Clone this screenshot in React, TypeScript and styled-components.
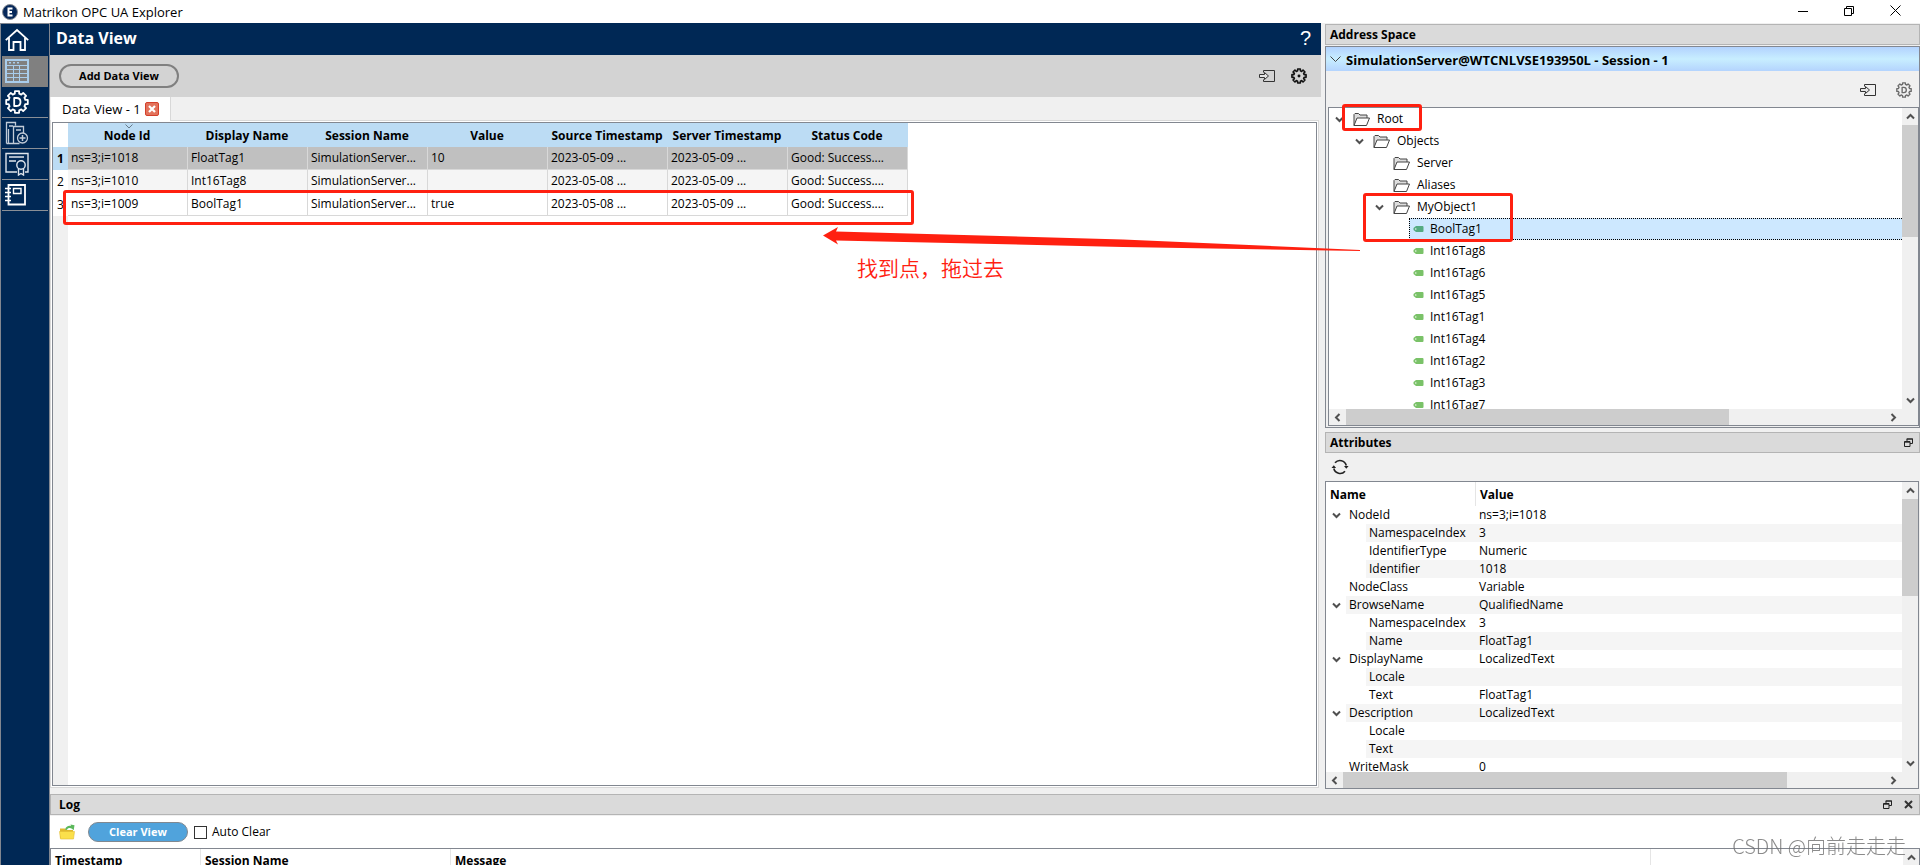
import React from 'react';
import styled, { createGlobalStyle, css } from 'styled-components';

const color = {
  navy: '#002855',
  frame: '#828790',
  face: '#f0f0f0',
  strip: '#d3d3d3',
  dock: '#dadada',
  dockEdge: '#b4b4b4',
  grid: '#d8d8d8',
  head: '#bcdcf4',
  alt: '#f5f5f5',
  thumb: '#cdcdcd',
  mark: '#ff2010',
};

const GlobalStyle = createGlobalStyle`
  *, *::before, *::after { box-sizing: border-box; }
  body {
    margin: 0;
    background: ${color.face};
    color: #000;
    font: 12px/16px "Open Sans", "Noto Sans CJK SC", sans-serif;
  }
  button {
    margin: 0; padding: 0; border: 0; background: none; color: inherit;
    font: inherit; cursor: pointer;
  }
  table { border-collapse: separate; border-spacing: 0; table-layout: fixed; }
  th, td { padding: 0; text-align: left; }
  svg { display: block; flex: none; }
`;

/* ---------- shell ---------- */

const Window = styled.div`
  display: flex;
  flex-direction: column;
  height: 100vh;
  overflow: hidden;
`;

const TitleBar = styled.header`
  display: flex;
  align-items: center;
  flex: none;
  height: 23px;
  padding: 0 2px;
  background: #fff;
`;

const AppTitle = styled.h1`
  flex: 1;
  margin: 0 0 0 5px;
  font-size: 13px;
  font-weight: 400;
`;

const WindowButton = styled.button`
  display: grid;
  place-items: center;
  width: 46px;
  height: 20px;
  margin-bottom: 2px;
`;

const Body = styled.div`
  display: flex;
  flex: 1;
  min-height: 0;
`;

const Sidebar = styled.nav`
  flex: none;
  width: 50px;
  padding: 1px 1px 0;
  background: ${color.navy};
  border: solid ${color.frame};
  border-width: 1px 1px 0 1px;
`;

const NavButton = styled.button<{ $active?: boolean; $line?: boolean }>`
  display: flex;
  align-items: center;
  width: 46px;
  height: 31px;
  padding-left: 3px;
  background: ${(p) => (p.$active ? '#808080' : 'transparent')};
  border-bottom: 1px solid ${(p) => (p.$line ? '#8a8f96' : 'transparent')};
`;

const Content = styled.div`
  display: flex;
  flex-direction: column;
  flex: 1;
  min-width: 0;
`;

const Workspace = styled.div`
  display: flex;
  flex: 1;
  gap: 4px;
  min-height: 0;
`;

/* ---------- data view ---------- */

const DataView = styled.main`
  position: relative;
  display: flex;
  flex-direction: column;
  flex: 1;
  min-width: 0;
`;

const ViewHeader = styled.div`
  display: flex;
  align-items: center;
  justify-content: space-between;
  height: 32px;
  padding: 0 10px 2px 6px;
  background: ${color.navy};
  color: #fff;
`;

const ViewTitle = styled.h2`
  margin: 0;
  font-size: 16px;
  line-height: 24px;
`;

const HelpButton = styled.button`
  font: 20px/24px "Liberation Sans", sans-serif;
`;

const ViewToolbar = styled.div`
  display: flex;
  align-items: center;
  gap: 16px;
  height: 42px;
  padding: 0 14px 0 9px;
  background: ${color.strip};
`;

const AddButton = styled.button`
  width: 120px;
  height: 24px;
  margin-right: auto;
  border: 2px solid #808080;
  border-radius: 12px;
  font-size: 11px;
  font-weight: 700;
`;

const TabStrip = styled.div`
  display: flex;
  align-items: center;
  height: 23px;
  padding-left: 1px;
`;

const Tab = styled.div`
  position: relative;
  display: flex;
  align-items: center;
  gap: 4px;
  width: 120px;
  height: 24px;
  margin-bottom: -1px;
  padding-left: 11px;
  background: #fff;
  border-right: 1px solid ${color.grid};
  font-size: 13px;
`;

const Pane = styled.div`
  display: flex;
  flex: 1;
  min-height: 0;
  margin: 0 2px 6px 0;
  padding: 1px;
  background: #fff;
  border: 1px solid ${color.grid};
`;

const GridFrame = styled.div`
  flex: 1;
  overflow: hidden;
  border: 1px solid ${color.frame};
  background: linear-gradient(to right, ${color.face} 15px, #fff 15px);
`;

const DataTable = styled.table`
  width: 855px;
  background: #fff;
`;

const HeadCell = styled.th`
  position: relative;
  height: 24px;
  padding: 2px 2px 0 0;
  background: ${color.head};
  text-align: center;
  white-space: nowrap;
`;

const CornerCell = styled.td`
  background: #fff;
`;

const RowNumber = styled.th<{ $current?: boolean }>`
  height: 23px;
  text-align: center;
  font-weight: ${(p) => (p.$current ? 700 : 400)};
  background: ${(p) => (p.$current ? color.head : '#fff')};
`;

const BodyCell = styled.td<{ $tone: string }>`
  height: 23px;
  padding: 0 0 0 3px;
  overflow: hidden;
  white-space: nowrap;
  background: ${(p) => p.$tone};
  border: solid ${color.grid};
  border-width: 0 1px 1px 0;
`;

const SortArrow = styled.svg`
  position: absolute;
  top: 1px;
  left: 57px;
`;

/* ---------- docks ---------- */

const SideColumn = styled.div`
  display: grid;
  grid-template-rows: minmax(0, 404fr) minmax(0, 357fr);
  gap: 4px;
  flex: none;
  width: 595px;
  padding: 1px 0 5px;
`;

const Dock = styled.section`
  display: flex;
  flex-direction: column;
  min-width: 0;
  min-height: 0;
`;

const DockTitle = styled.div<{ $inset?: number }>`
  display: flex;
  align-items: center;
  gap: 12px;
  flex: none;
  height: 21px;
  padding: 0 6px 0 ${(p) => p.$inset ?? 4}px;
  background: ${color.dock};
  border: 1px solid ${color.dockEdge};
`;

const DockName = styled.h2`
  flex: 1;
  margin: 0;
  font-size: 12px;
  line-height: 16px;
`;

const SessionFrame = styled.div`
  display: flex;
  flex-direction: column;
  flex: 1;
  min-height: 0;
  margin-top: 1px;
  padding: 0 0 1px 0;
  border: 1px solid ${color.frame};
`;

const SessionButton = styled.button`
  display: flex;
  align-items: center;
  gap: 5px;
  flex: none;
  height: 24px;
  padding: 1px 0 0 4px;
  font-size: 13px;
  font-weight: 700;
  background: linear-gradient(#b2d2fe, #c8eeff 50%, #b4d4fe);
`;

const SessionTools = styled.div`
  display: flex;
  align-items: center;
  justify-content: flex-end;
  gap: 20px;
  flex: none;
  height: 36px;
  padding: 2px 7px 0 0;
`;

const ScrollFrame = styled.div<{ $left?: number; $right?: number }>`
  display: grid;
  grid-template: minmax(0, 1fr) 16px / minmax(0, 1fr) 16px;
  flex: 1;
  min-height: 0;
  margin-left: ${(p) => p.$left ?? 0}px;
  margin-right: ${(p) => p.$right ?? 0}px;
  background: ${color.face};
  border: 1px solid ${color.frame};
`;

const Viewport = styled.div`
  position: relative;
  overflow: hidden;
  background: #fff;
`;

const Bar = styled.div<{ $vertical?: boolean }>`
  display: flex;
  flex-direction: ${(p) => (p.$vertical ? 'column' : 'row')};
  background: ${color.face};
`;

const BarButton = styled.button<{ $vertical?: boolean }>`
  display: grid;
  place-items: center;
  flex: none;
  ${(p) => (p.$vertical ? css`height: 17px; width: 16px;` : css`width: 17px; height: 16px;`)}
`;

const Track = styled.div<{ $vertical?: boolean }>`
  display: flex;
  flex-direction: ${(p) => (p.$vertical ? 'column' : 'row')};
  flex: 1;
`;

const Thumb = styled.div<{ $share: number }>`
  flex: 0 0 ${(p) => p.$share}%;
  background: ${color.thumb};
`;

/* ---------- tree ---------- */

const Tree = styled.ul`
  margin: 0;
  padding: 0;
  list-style: none;
`;

const TreeRow = styled.li<{ $level: number }>`
  display: flex;
  height: 22px;
  padding-left: ${(p) => p.$level * 20}px;
`;

const Twisty = styled.span`
  display: grid;
  place-items: center;
  flex: none;
  width: 20px;
`;

const NodeLabel = styled.span<{ $selected?: boolean; $leaf?: boolean }>`
  display: flex;
  align-items: center;
  flex: 1;
  gap: ${(p) => (p.$leaf ? 6 : 7)}px;
  padding-left: 3px;
  border: 1px dotted transparent;
  border-right: 0;
  ${(p) => p.$selected && css`background: #cde8ff; border-color: #000;`}
`;

/* ---------- attributes ---------- */

const RefreshBar = styled.div`
  display: flex;
  align-items: center;
  flex: none;
  height: 28px;
  padding-left: 6px;
`;

const AttrTable = styled.table`
  width: 100%;
`;

const AttrHead = styled.th<{ $line?: boolean }>`
  height: 24px;
  padding: 1px 0 0 4px;
  border-right: ${(p) => (p.$line ? 0 : 1)}px solid #e5e5e5;
`;

const AttrCell = styled.td<{ $alt: boolean }>`
  height: 18px;
  padding-left: 3px;
  background: ${(p) => (p.$alt ? color.alt : '#fff')};
`;

const AttrNameCell = styled.td`
  height: 18px;
`;

const AttrName = styled.div<{ $level: number }>`
  display: flex;
  height: 18px;
  padding-left: ${(p) => p.$level * 20}px;
`;

const AttrText = styled.span<{ $alt: boolean }>`
  flex: 1;
  padding-left: 3px;
  line-height: 18px;
  white-space: nowrap;
  background: ${(p) => (p.$alt ? color.alt : '#fff')};
`;

/* ---------- log ---------- */

const LogDock = styled.section`
  flex: none;
  height: 71px;
  overflow: hidden;
`;

const LogTools = styled.div`
  display: flex;
  align-items: center;
  height: 32px;
  margin-top: 1px;
  padding-left: 9px;
  background: #fff;
`;

const ClearButton = styled.button`
  width: 100px;
  height: 20px;
  margin: 0 6px 0 12px;
  background: #50a3dc;
  border: 1px solid #808890;
  border-radius: 10px;
  color: #fff;
  font-size: 11px;
  font-weight: 700;
  line-height: 16px;
`;

const CheckLabel = styled.label`
  display: flex;
  align-items: center;
  gap: 5px;
`;

const CheckBox = styled.input`
  appearance: none;
  width: 13px;
  height: 13px;
  margin: 0;
  background: #fff;
  border: 1px solid #333;
  &:checked { background: #50a3dc; }
`;

const LogGrid = styled.div`
  display: flex;
  height: 40px;
  background: #fff;
  border: 1px solid ${color.frame};
`;

const LogTable = styled.table`
  flex: 1;
  height: 24px;
`;

const LogHead = styled.th`
  height: 24px;
  padding-left: 4px;
  border-right: 1px solid #e5e5e5;
  &:last-child { border-right: 0; }
`;

/* ---------- annotations ---------- */

const Mark = styled.div<{ $x: number; $y: number; $w: number; $h: number }>`
  position: absolute;
  z-index: 2;
  left: ${(p) => p.$x}px;
  top: ${(p) => p.$y}px;
  width: ${(p) => p.$w}px;
  height: ${(p) => p.$h}px;
  border: 3px solid ${color.mark};
  border-radius: 3px;
  pointer-events: none;
`;

const ArrowDrawing = styled.svg`
  position: absolute;
  z-index: 2;
  left: 773px;
  top: 204px;
  pointer-events: none;
`;

const Note = styled.p`
  position: absolute;
  z-index: 2;
  left: 807px;
  top: 230px;
  margin: 0;
  color: ${color.mark};
  font: 350 21px/28px "Noto Sans CJK SC", sans-serif;
  white-space: nowrap;
`;

const TreeHost = styled.div`
  position: relative;
  display: flex;
  flex: 1;
  min-height: 0;
`;

const Watermark = styled.div`
  position: fixed;
  z-index: 3;
  right: 14px;
  bottom: 6px;
  color: rgba(110, 110, 110, 0.8);
  font: 300 20px/26px "Noto Sans CJK SC", sans-serif;
  pointer-events: none;
`;

/* ---------- icons ---------- */

const Logo = () => (
  <svg width="16" height="16" viewBox="0 0 16 16">
    <circle cx="8" cy="8" r="7.5" fill="#06285a" stroke="#8a8f96" />
    <path d="M10.5 4.5h-4v7h4M6.5 8h3.5" fill="none" stroke="#fff" strokeWidth="2" />
  </svg>
);

const HomeIcon = () => (
  <svg width="24" height="24" viewBox="0 0 24 24" fill="none" stroke="#fff" strokeWidth="1.8">
    <path d="M0.8 12.2 12 2l11.2 10.2" />
    <path d="M4 10v12h4.5v-8h7v8H20V10" />
  </svg>
);

const SheetIcon = () => (
  <svg width="24" height="24" viewBox="0 0 24 24">
    <rect x="1" y="1" width="22" height="22" fill="#808080" stroke="#a9cdec" strokeWidth="2" />
    <path d="M1 6.5h22M1 10.5h22M1 14.5h22M1 18.5h22M8.5 6v17M14.5 6v17" stroke="#a9cdec" />
    <path d="M4 3.7h2M8 3.7h2M12 3.7h2" stroke="#a9cdec" strokeWidth="1.6" />
  </svg>
);

const gearPath = (c: number, outer: number, inner: number) => {
  const points: string[] = [];
  for (let i = 0; i < 8; i++) {
    const spread: [number, number][] = [[-0.26, inner], [-0.19, outer], [0.19, outer], [0.26, inner]];
    spread.forEach(([d, r]) => {
      const a = (i * Math.PI) / 4 + d;
      points.push(`${(c + r * Math.cos(a)).toFixed(2)} ${(c + r * Math.sin(a)).toFixed(2)}`);
    });
  }
  return `M${points.join('L')}Z`;
};

const GearD = ({ size, stroke, line }: { size: number; stroke: string; line: number }) => (
  <svg width={size} height={size} viewBox="0 0 24 24" fill="none" stroke={stroke} strokeWidth={line} strokeLinejoin="round">
    <path d={gearPath(12, 11, 8.6)} />
    <path d="M9.2 8v8h2.4c2.4 0 3.9-1.5 3.9-4s-1.5-4-3.9-4z" />
  </svg>
);

const GearDot = () => (
  <svg width="16" height="16" viewBox="0 0 24 24" fill="none" stroke="#111" strokeWidth="2.4" strokeLinejoin="round">
    <path d={gearPath(12, 10.8, 8)} />
    <circle cx="12" cy="12" r="2.2" fill="#111" stroke="none" />
  </svg>
);

const ServerAddIcon = () => (
  <svg width="24" height="24" viewBox="0 0 24 24" fill="none" stroke="#c2ccd8" strokeWidth="1.3">
    <path d="M1.5 22.5V1.5h9v3M1.5 22.5h13M4 5h4M3.500 22V8M8.500 22V5.500h10V12M11 9h5" />
    <circle cx="17.500" cy="17" r="5" />
    <path d="M17.500 14v6M14.500 17h6" strokeWidth="1.5" />
  </svg>
);

const CertificateIcon = () => (
  <svg width="24" height="24" viewBox="0 0 24 24" fill="none" stroke="#dfe5ec" strokeWidth="1.4">
    <path d="M12 20H1V1.500h22V20h-3M4 5h15M4 9h7" />
    <circle cx="16" cy="13" r="4.2" />
    <path d="M13.500 16.500V23l2.500-1.500 2.500 1.500v-6.500" />
  </svg>
);

const NotebookIcon = () => (
  <svg width="24" height="24" viewBox="0 0 24 24" fill="none" stroke="#fff" strokeWidth="1.8">
    <path d="M3.500 2h16.500v19.500h-16.500z" />
    <path d="M8.500 5.500h7.500v5h-7.500z" strokeWidth="1.4" />
    <path d="M0 5.500h6M0 9.500h6M0 13.500h6M0 17.500h6" strokeWidth="1.6" />
  </svg>
);

const EnterIcon = () => (
  <svg width="16" height="14" viewBox="0 0 16 14" fill="none" stroke="#333">
    <path d="M4.500 3.500V1.500h11v11h-11V10.500" />
    <path d="M0.500 5.500h5V3.500L9.500 7l-4 3.500V8.500h-5z" fill="#e4e4e4" />
  </svg>
);

const ChevronIcon = ({ turn = 0 }: { turn?: number }) => (
  <svg width="9" height="9" viewBox="0 0 9 9" fill="none" stroke="#505050" strokeWidth="2">
    <path d="M1 2.500 4.500 6 8 2.500" transform={`rotate(${turn} 4.5 4.5)`} />
  </svg>
);

const FolderIcon = () => (
  <svg width="17" height="15" viewBox="0 0 17 15" fill="#fff" stroke="#444" strokeLinejoin="round">
    <path d="M1 13.500V2.500L2 1.500h3.500L7 3h7v3" fill="#ddd" />
    <path d="M1 13.500 4 6h12.500l-3 7.500z" />
  </svg>
);

const TagIcon = ({ tint }: { tint: string }) => (
  <svg width="11" height="8" viewBox="0 0 11 8">
    <path d="M3 1h6.500q1 0 1 1v4q0 1-1 1H3L0.500 5V3z" fill={tint} />
    <circle cx="2.800" cy="4" r="0.7" fill="#fff" />
  </svg>
);

const FloatIcon = () => (
  <svg width="9" height="9" viewBox="0 0 9 9" fill="none" stroke="#222">
    <path d="M3 3V1h5.500v4.500H6" />
    <path d="M2.500 1h6.500" />
    <path d="M0.500 3.500h5.500v5H0.500zM0.500 4.200h5.500" />
  </svg>
);

const CrossIcon = () => (
  <svg width="9" height="9" viewBox="0 0 9 9" stroke="#333" strokeWidth="2">
    <path d="M1 1l7 7M8 1 1 8" />
  </svg>
);

const RefreshIcon = () => (
  <svg width="18" height="16" viewBox="0 0 18 16" fill="none" stroke="#222" strokeWidth="1.6">
    <path d="M2.800 9.500A6.500 6.500 0 0 0 14 12.200" />
    <path d="M15.300 6.500A6.500 6.500 0 0 0 4 3.800" />
    <path d="M0.500 9 2.800 6.200 5.100 9zM13 7 15.300 9.800 17.600 7z" fill="#222" stroke="none" />
  </svg>
);

const OpenFolderIcon = () => (
  <svg width="17" height="16" viewBox="0 0 17 16">
    <path d="M1 4.500h5l1.500 1.500H14v8H1z" fill="#e0b92e" />
    <path d="M0.500 7.500h15L14.500 15h-13z" fill="#fbe04b" stroke="#e3bd35" strokeWidth="0.6" />
    <path d="M6 5.500C7 2 10 1.200 12 2L11.500 0.500l4 .8-.8 5-1.700-1.600C11 3.500 8.500 4 8 6z" fill="#5cb85c" />
  </svg>
);

const CloseTabIcon = () => (
  <svg width="14" height="14" viewBox="0 0 14 14">
    <rect x="0.500" y="0.500" width="13" height="13" rx="1.500" fill="#e2725b" stroke="#d4402b" />
    <path d="M4 4l6 6M10 4l-6 6" stroke="#fff" strokeWidth="2.2" />
  </svg>
);

/* ---------- data ---------- */

const columns = ['Node Id', 'Display Name', 'Session Name', 'Value', 'Source Timestamp', 'Server Timestamp', 'Status Code'];

const rows = [
  ['ns=3;i=1018', 'FloatTag1', 'SimulationServer...', '10', '2023-05-09 ...', '2023-05-09 ...', 'Good: Success....'],
  ['ns=3;i=1010', 'Int16Tag8', 'SimulationServer...', '', '2023-05-08 ...', '2023-05-09 ...', 'Good: Success....'],
  ['ns=3;i=1009', 'BoolTag1', 'SimulationServer...', 'true', '2023-05-08 ...', '2023-05-09 ...', 'Good: Success....'],
];
const rowTones = ['#c0c0c0', color.alt, '#fff'];

type Node = { name: string; level: number; open?: boolean; tag?: boolean; selected?: boolean };
const nodes: Node[] = [
  { name: 'Root', level: 0, open: true },
  { name: 'Objects', level: 1, open: true },
  { name: 'Server', level: 2 },
  { name: 'Aliases', level: 2 },
  { name: 'MyObject1', level: 2, open: true },
  { name: 'BoolTag1', level: 3, tag: true, selected: true },
  ...[8, 6, 5, 1, 4, 2, 3, 7].map((n) => ({ name: `Int16Tag${n}`, level: 3, tag: true })),
];

type Attr = { name: string; value: string; level: number; open?: boolean };
const attributes: Attr[] = [
  { name: 'NodeId', value: 'ns=3;i=1018', level: 0, open: true },
  { name: 'NamespaceIndex', value: '3', level: 1 },
  { name: 'IdentifierType', value: 'Numeric', level: 1 },
  { name: 'Identifier', value: '1018', level: 1 },
  { name: 'NodeClass', value: 'Variable', level: 0 },
  { name: 'BrowseName', value: 'QualifiedName', level: 0, open: true },
  { name: 'NamespaceIndex', value: '3', level: 1 },
  { name: 'Name', value: 'FloatTag1', level: 1 },
  { name: 'DisplayName', value: 'LocalizedText', level: 0, open: true },
  { name: 'Locale', value: '', level: 1 },
  { name: 'Text', value: 'FloatTag1', level: 1 },
  { name: 'Description', value: 'LocalizedText', level: 0, open: true },
  { name: 'Locale', value: '', level: 1 },
  { name: 'Text', value: '', level: 1 },
  { name: 'WriteMask', value: '0', level: 0 },
];

/* ---------- parts ---------- */

const ScrollBar = ({ vertical, share }: { vertical?: boolean; share: number }) => (
  <Bar $vertical={vertical}>
    <BarButton $vertical={vertical} aria-label={vertical ? 'Scroll up' : 'Scroll left'}>
      <ChevronIcon turn={vertical ? 180 : 90} />
    </BarButton>
    <Track $vertical={vertical}>
      <Thumb $share={share} />
    </Track>
    <BarButton $vertical={vertical} aria-label={vertical ? 'Scroll down' : 'Scroll right'}>
      <ChevronIcon turn={vertical ? 0 : -90} />
    </BarButton>
  </Bar>
);

const DataGrid = () => (
  <DataTable>
    <colgroup>
      <col width="15" />
      {columns.map((c) => <col key={c} width="120" />)}
    </colgroup>
    <thead>
      <tr>
        <CornerCell />
        {columns.map((c, i) => (
          <HeadCell key={c} scope="col">
            {i === 0 && (
              <SortArrow width="8" height="5" viewBox="0 0 8 5" fill="none" stroke="#667a8a">
                <path d="M0.500 0.500 4 4 7.500 0.500" />
              </SortArrow>
            )}
            {c}
          </HeadCell>
        ))}
      </tr>
    </thead>
    <tbody>
      {rows.map((cells, r) => (
        <tr key={cells[0]}>
          <RowNumber scope="row" $current={r === 0}>{r + 1}</RowNumber>
          {cells.map((text, c) => <BodyCell key={c} $tone={rowTones[r]}>{text}</BodyCell>)}
        </tr>
      ))}
    </tbody>
  </DataTable>
);

const AddressTree = () => (
  <Tree role="tree" aria-label="Address Space">
    {nodes.map((n) => (
      <TreeRow key={n.name} $level={n.level} role="treeitem" aria-level={n.level + 1} aria-selected={!!n.selected}>
        <Twisty>{n.open && <ChevronIcon />}</Twisty>
        <NodeLabel $leaf={n.tag} $selected={n.selected}>
          {n.tag ? <TagIcon tint={n.selected ? '#55ab82' : '#7ac268'} /> : <FolderIcon />}
          {n.name}
        </NodeLabel>
      </TreeRow>
    ))}
  </Tree>
);

const AttributeList = () => (
  <AttrTable>
    <colgroup>
      <col width="150" />
      <col />
    </colgroup>
    <thead>
      <tr>
        <AttrHead scope="col">Name</AttrHead>
        <AttrHead scope="col" $line>Value</AttrHead>
      </tr>
    </thead>
    <tbody>
      {attributes.map((a, i) => {
        const alt = i % 2 === 1;
        return (
          <tr key={i}>
            <AttrNameCell>
              <AttrName $level={a.level}>
                <Twisty>{a.open && <ChevronIcon />}</Twisty>
                <AttrText $alt={alt}>{a.name}</AttrText>
              </AttrName>
            </AttrNameCell>
            <AttrCell $alt={alt}>{a.value}</AttrCell>
          </tr>
        );
      })}
    </tbody>
  </AttrTable>
);

export default function App() {
  return (
    <Window>
      <GlobalStyle />
      <TitleBar>
        <Logo />
        <AppTitle>Matrikon OPC UA Explorer</AppTitle>
        <WindowButton aria-label="Minimize">
          <svg width="10" height="10" stroke="#000"><path d="M0 5.500h10" /></svg>
        </WindowButton>
        <WindowButton aria-label="Restore">
          <svg width="10" height="10" fill="none" stroke="#000"><path d="M0.500 2.500h7v7h-7zM2.500 2.500v-2h7v7h-2" /></svg>
        </WindowButton>
        <WindowButton aria-label="Close">
          <svg width="11" height="11" stroke="#000"><path d="M0.500 0.500l10 10M10.500 0.500l-10 10" /></svg>
        </WindowButton>
      </TitleBar>

      <Body>
        <Sidebar>
          <NavButton aria-label="Home"><HomeIcon /></NavButton>
          <NavButton aria-label="Data View" $active><SheetIcon /></NavButton>
          <NavButton aria-label="Discovery" $line><GearD size={24} stroke="#fff" line={1.8} /></NavButton>
          <NavButton aria-label="Add Server" $line><ServerAddIcon /></NavButton>
          <NavButton aria-label="Certificates" $line><CertificateIcon /></NavButton>
          <NavButton aria-label="Log Book" $line><NotebookIcon /></NavButton>
        </Sidebar>

        <Content>
          <Workspace>
            <DataView>
              <ViewHeader>
                <ViewTitle>Data View</ViewTitle>
                <HelpButton>?</HelpButton>
              </ViewHeader>
              <ViewToolbar>
                <AddButton>Add Data View</AddButton>
                <button aria-label="Import"><EnterIcon /></button>
                <button aria-label="Settings"><GearDot /></button>
              </ViewToolbar>
              <TabStrip>
                <Tab>
                  Data View - 1
                  <button aria-label="Close tab"><CloseTabIcon /></button>
                </Tab>
              </TabStrip>
              <Pane>
                <GridFrame>
                  <DataGrid />
                </GridFrame>
              </Pane>
              <Mark $x={13} $y={167} $w={851} $h={35} />
              <ArrowDrawing width="537" height="26" fill={color.mark}>
                <path d="M0 8.500 15 0l-2 4.500L300 12.500 537 23v1L300 20 13 13.500l2 4z" />
              </ArrowDrawing>
              <Note lang="zh-CN">找到点，拖过去</Note>
            </DataView>

            <SideColumn>
              <Dock>
                <DockTitle><DockName>Address Space</DockName></DockTitle>
                <SessionFrame>
                  <SessionButton>
                    <svg width="11" height="7" fill="none" stroke="#444"><path d="M0.500 0.500 5.500 5.500 10.500 0.500" /></svg>
                    SimulationServer@WTCNLVSE193950L - Session - 1
                  </SessionButton>
                  <SessionTools>
                    <button aria-label="Import"><EnterIcon /></button>
                    <button aria-label="Discovery"><GearD size={16} stroke="#6a6a6a" line={2} /></button>
                  </SessionTools>
                  <TreeHost>
                    <ScrollFrame $left={2}>
                      <Viewport><AddressTree /></Viewport>
                      <ScrollBar vertical share={42} />
                      <ScrollBar share={71} />
                    </ScrollFrame>
                    <Mark $x={16} $y={-3} $w={80} $h={27} />
                    <Mark $x={37} $y={86} $w={150} $h={49} />
                  </TreeHost>
                </SessionFrame>
              </Dock>

              <Dock>
                <DockTitle>
                  <DockName>Attributes</DockName>
                  <button aria-label="Float Attributes"><FloatIcon /></button>
                </DockTitle>
                <RefreshBar>
                  <button aria-label="Refresh"><RefreshIcon /></button>
                </RefreshBar>
                <ScrollFrame $right={1}>
                  <Viewport><AttributeList /></Viewport>
                  <ScrollBar vertical share={38} />
                  <ScrollBar share={82} />
                </ScrollFrame>
              </Dock>
            </SideColumn>
          </Workspace>

          <LogDock>
            <DockTitle $inset={8}>
              <DockName>Log</DockName>
              <button aria-label="Float Log"><FloatIcon /></button>
              <button aria-label="Close Log"><CrossIcon /></button>
            </DockTitle>
            <LogTools>
              <button aria-label="Open log"><OpenFolderIcon /></button>
              <ClearButton>Clear View</ClearButton>
              <CheckLabel>
                <CheckBox type="checkbox" />
                Auto Clear
              </CheckLabel>
            </LogTools>
            <LogGrid>
              <LogTable>
                <colgroup>
                  <col width="150" />
                  <col width="250" />
                  <col width="1200" />
                  <col />
                </colgroup>
                <thead>
                  <tr>
                    <LogHead scope="col">Timestamp</LogHead>
                    <LogHead scope="col">Session Name</LogHead>
                    <LogHead scope="col">Message</LogHead>
                    <LogHead as="td" />
                  </tr>
                </thead>
              </LogTable>
              <Bar $vertical>
                <BarButton $vertical aria-label="Scroll up"><ChevronIcon turn={180} /></BarButton>
              </Bar>
            </LogGrid>
          </LogDock>
        </Content>
      </Body>
      <Watermark>CSDN @向前走走走</Watermark>
    </Window>
  );
}
